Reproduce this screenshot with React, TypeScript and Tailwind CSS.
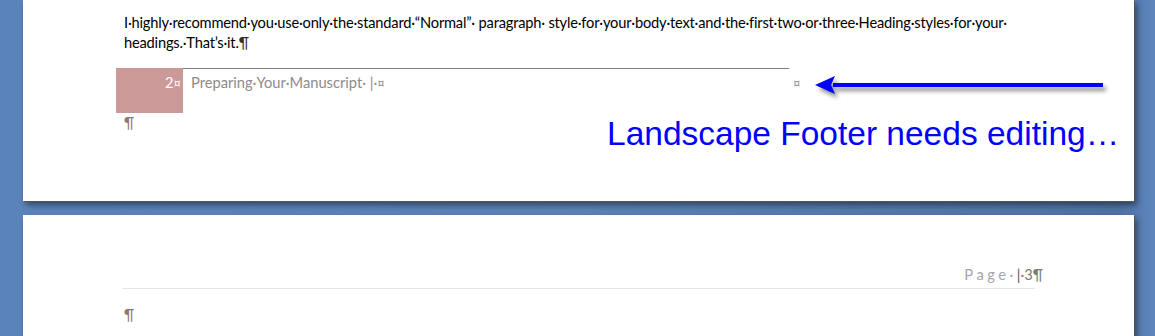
const body = "font-['Lato','Open_Sans',sans-serif]";

function Arrow() {
    return (
        <svg
            width="300"
            height="28"
            viewBox="0 0 300 28"
            className="absolute left-[790px] top-[72px] drop-shadow-[3px_4px_2px_rgba(0,0,0,0.45)]"
        >
            <line x1="20" y1="13" x2="290" y2="13" stroke="#0000ff" strokeWidth="4" />
            <polygon points="2,13 22,4 18,13 22,22" fill="#0000ff" />
        </svg>
    );
}

function PageOne() {
    return (
        <div className="relative ml-[23px] h-[201px] w-[1111px] bg-white shadow-[1px_1px_0_#555,3px_4px_6px_rgba(0,0,0,0.45)]">
            <div className={`${body} pt-[13px] pl-[101px] text-[14.67px] leading-[20px] tracking-[-0.2px] text-black`}>
                <p className="whitespace-nowrap">
                    I·highly·recommend·you·use·only·the·standard·“Normal”· paragraph· style·for·your·body·text·and·the·first·two·or·three·Heading·styles·for·your·
                </p>
                <p className="whitespace-nowrap">
                    headings.·That’s·it.<span className="text-[#3a2a2a]">¶</span>
                </p>
            </div>

            {/* footer row */}
            <div className={`${body} mt-[15px] ml-[93px] flex text-[14.67px] leading-[20px]`}>
                <div className="flex h-[45px] w-[67px] items-start justify-end bg-[#cc9999] pt-[5px] pr-[2px] text-white">
                    2<span className="text-[13px] leading-[20px]">¤</span>
                </div>
                <div className="flex h-[45px] w-[606px] items-start border-t border-[#808080] pt-[4px] pl-[8px] text-[#8c8c8c]">
                    <span>Preparing·Your·Manuscript· |·<span className="text-[13px]">¤</span></span>
                </div>
                <span className="pt-[5px] pl-[4px] text-[13px] text-[#8c8c8c]">¤</span>
            </div>
            <p className={`${body} ml-[101px] text-[14.67px] leading-[20px] text-[#8b7878]`}>¶</p>

            <Arrow />
            <p className="absolute left-[584px] top-[114px] whitespace-nowrap font-['Liberation_Sans',Arial,sans-serif] text-[33.5px] leading-[40px] text-[#0000ff]">
                Landscape Footer needs editing…
            </p>
        </div>
    );
}

function PageTwo() {
    return (
        <div className="ml-[23px] h-[121px] w-[1111px] bg-white shadow-[1px_1px_0_#555,3px_4px_6px_rgba(0,0,0,0.45)]">
            <div className={`${body} ml-[99px] w-[913px] pt-[50px] text-[14.67px] leading-[20px]`}>
                <div className="border-b border-[#e6e6e6] pb-[3px]">
                    <div className="-mr-[8px] flex justify-end">
                        <span className="tracking-[3.5px] text-[#a6a6a6]">Page·</span>
                        <span className="text-[#555]">|</span>
                        <span className="text-[#7a7a7a]">·3¶</span>
                    </div>
                </div>
            </div>
            <p className={`${body} ml-[101px] mt-[16px] text-[14.67px] leading-[20px] text-[#8b7878]`}>¶</p>
        </div>
    );
}

export default function App() {
    return (
        <div className="flex h-[336px] w-[1155px] flex-col gap-[14px] overflow-hidden bg-[linear-gradient(90deg,#5b83bb_0%,#5a80b6_50%,#4e72a4_97%,#5f86bd_100%)]">
            <PageOne />
            <PageTwo />
        </div>
    );
}
